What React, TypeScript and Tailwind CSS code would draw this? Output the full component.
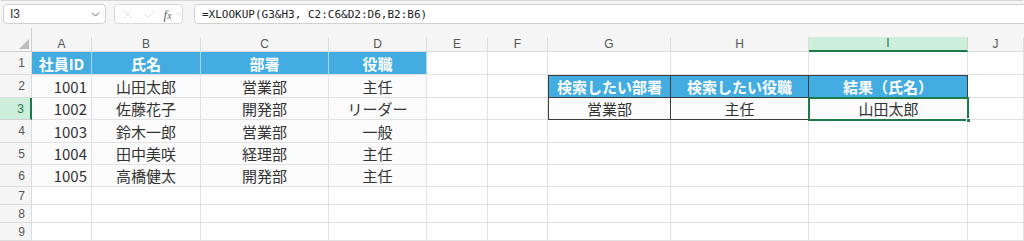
import { ChevronDown, X, Check } from 'lucide-react';

const COLS = ['A', 'B', 'C', 'D', 'E', 'F', 'G', 'H', 'I', 'J'];
const ROW_H = ['h-[23px]', 'h-[23px]', 'h-[22px]', 'h-[23px]', 'h-[22px]', 'h-[22px]', 'h-[18px]', 'h-[18px]', 'h-[18px]'];

const employees = [
  ['1001', '山田太郎', '営業部', '主任'],
  ['1002', '佐藤花子', '開発部', 'リーダー'],
  ['1003', '鈴木一郎', '営業部', '一般'],
  ['1004', '田中美咲', '経理部', '主任'],
  ['1005', '高橋健太', '開発部', '主任'],
];

const jp = { fontFamily: '"Noto Sans CJK JP", "Noto Sans", sans-serif' };
const ui = { fontFamily: '"Liberation Sans", Arial, sans-serif' };

type CellProps = {
  children?: React.ReactNode;
  className?: string;
};

function Cell({ children, className = '' }: CellProps) {
  return (
    <div
      className={`flex items-center justify-center border-r border-b border-[#e2e2e2] text-[15px] leading-none text-[#333] ${className}`}
      style={jp}
    >
      {children}
    </div>
  );
}

function cellFor(row: number, col: number) {
  // row: 1-based sheet row, col: 0 = A
  if (row === 1 && col < 4) {
    const heads = ['社員ID', '氏名', '部署', '役職'];
    return (
      <Cell className="bg-[#43ace1] !border-r-[#a6d7f1] font-bold text-white">{heads[col]}</Cell>
    );
  }
  if (row >= 2 && row <= 6 && col < 4) {
    const v = employees[row - 2][col];
    if (col === 0) return <Cell className="bg-[#fbfbfb] !justify-end pr-[4px]">{v}</Cell>;
    return <Cell className="bg-[#fbfbfb]">{v}</Cell>;
  }
  if (row === 2 && col >= 6 && col <= 8) {
    const heads = ['検索したい部署', '検索したい役職', '結果（氏名）'];
    return (
      <Cell
        className={`bg-[#43ace1] font-bold text-white !border-b-[#3c3c3c] !border-r-[#3c3c3c] border-t border-t-[#3c3c3c] ${col === 6 ? 'border-l border-l-[#3c3c3c]' : ''}`}
      >
        {heads[col - 6]}
      </Cell>
    );
  }
  if (row === 3 && col >= 6 && col <= 7) {
    const vals = ['営業部', '主任'];
    return (
      <Cell
        className={`bg-[#fbfbfb] !border-b-[#3c3c3c] !border-r-[#3c3c3c] ${col === 6 ? 'border-l border-l-[#3c3c3c]' : ''}`}
      >
        {vals[col - 6]}
      </Cell>
    );
  }
  if (row === 3 && col === 8) {
    return (
      <div className="relative">
        <div
          className="absolute -top-px -left-px -right-px -bottom-px flex items-center justify-center border-2 border-[#1e7a48] bg-[#fbfbfb] text-[15px] text-[#333]"
          style={jp}
        >
          山田太郎
        </div>
        <div className="absolute -bottom-[3px] -right-[3px] h-[5px] w-[5px] border border-white bg-[#1e7a48]" />
      </div>
    );
  }
  return <Cell className="bg-white" />;
}

export default function App() {
  return (
    <div className="flex h-[241px] w-[1024px] flex-col overflow-hidden bg-[#f5f5f5]" style={ui}>
      <div className="mx-[1px] h-[4px] rounded-b-[4px] border-x border-b border-[#d6d6d6] bg-white" />

      <div className="mt-[3px] flex h-[20px] items-stretch">
        <div className="ml-[3px] flex w-[103px] items-center justify-between rounded-[4px] border border-[#d1d1d1] bg-white pl-[6px] pr-[3px]">
          <span className="text-[12px] text-[#333]">I3</span>
          <ChevronDown size={13} strokeWidth={1.6} className="text-[#555]" />
        </div>
        <div className="ml-[8px] flex w-[69px] items-center rounded-[4px] border border-[#d8d8d8] bg-white pl-[6px]">
          <X size={15} strokeWidth={1.1} className="text-[#c4c4c4]" />
          <Check size={15} strokeWidth={1.1} className="ml-[8px] text-[#c4c4c4]" />
          <span className="ml-[7px] text-[13px] italic leading-none text-[#666]" style={{ fontFamily: '"Liberation Serif", serif' }}>
            f<span className="text-[10px]">x</span>
          </span>
          <ChevronDown size={8} strokeWidth={1.6} className="ml-[3px] text-[#aaa]" />
        </div>
        <div className="ml-[11px] -mr-[4px] flex flex-1 items-center rounded-[4px] border border-[#d1d1d1] bg-white pl-[7px]">
          <span className="text-[11px] leading-none text-[#222]" style={{ fontFamily: '"DejaVu Sans Mono", "Liberation Mono", monospace' }}>
            =XLOOKUP(G3&amp;H3, C2:C6&amp;D2:D6,B2:B6)
          </span>
        </div>
      </div>

      <div className="mt-[13px] grid grid-cols-[32px_60px_109px_128px_98px_61px_60px_123px_138px_159px_56px]">
        <div className="relative flex h-[15px] items-end justify-end border-r border-b border-[#cfcfcf] pr-[2px] pb-[2px]">
          <div className="absolute -top-[9px] right-[-1px] h-[9px] w-px bg-[#cfcfcf]" />
          <div className="h-0 w-0 border-b-[10px] border-l-[10px] border-b-[#bdbdbd] border-l-transparent" />
        </div>
        {COLS.map((c) => (
          <div
            key={c}
            className={`flex h-[15px] items-end justify-center border-r border-b text-[12px] leading-[14px] ${
              c === 'I'
                ? 'border-b-2 border-b-[#1e7a48] border-r-[#cfcfcf] bg-[#cdeedb] text-[#1e7a48]'
                : 'border-[#dcdcdc] text-[#555]'
            }`}
          >
            {c}
          </div>
        ))}

        {ROW_H.map((h, i) => {
          const row = i + 1;
          return (
            <div key={row} className="contents">
              <div
                className={`${h} flex items-center justify-end pr-[6px] text-[12px] ${
                  row === 3
                    ? 'border-r-2 border-b border-r-[#1e7a48] border-b-[#cfcfcf] bg-[#cdeedb] text-[#1e7a48]'
                    : 'border-r border-b border-[#dcdcdc] text-[#555]'
                }`}
              >
                {row}
              </div>
              {COLS.map((_, col) => (
                <div key={col} className={`${h} grid`}>
                  {cellFor(row, col)}
                </div>
              ))}
            </div>
          );
        })}
      </div>
    </div>
  );
}
